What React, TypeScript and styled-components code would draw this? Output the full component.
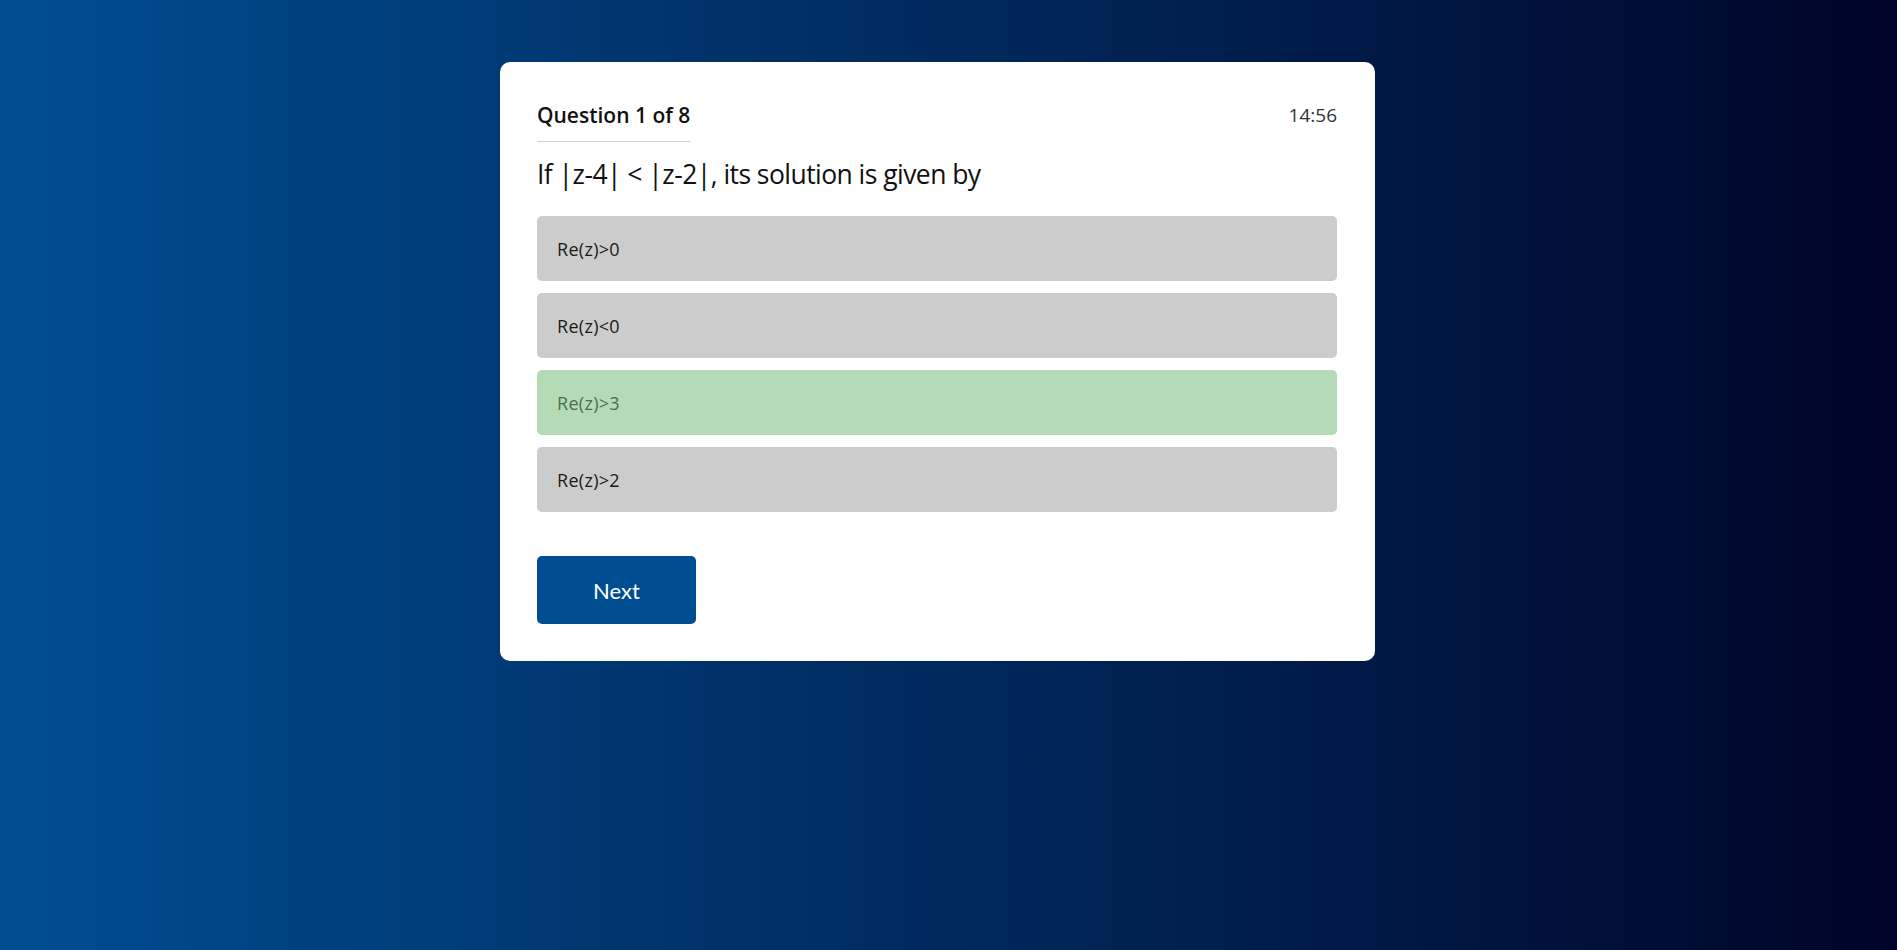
import React from "react";
import styled, { createGlobalStyle } from "styled-components";

const Global = createGlobalStyle`
  html, body { margin: 0; padding: 0; height: 100%; }
  body {
    font-family: "Open Sans", "Noto Sans", sans-serif;
    background: linear-gradient(to right, #004e92, #000428);
    min-height: 950px;
  }
  #root { min-height: 100%; }
`;

const Page = styled.div`
  display: flex;
  justify-content: center;
  align-items: flex-start;
  padding: 62px 22px 0 0;
`;

const Card = styled.div`
  width: 875px;
  box-sizing: border-box;
  background: #ffffff;
  border-radius: 10px;
  padding: 37px 38px 37px 37px;
`;

const Header = styled.div`
  display: flex;
  justify-content: space-between;
  align-items: flex-start;
`;

const Title = styled.div`
  font-size: 21px;
  font-weight: 600;
  color: #111;
  line-height: 33px;
  padding-bottom: 9px;
  border-bottom: 1px solid #cfcfcf;
`;

const Timer = styled.div`
  font-size: 19px;
  color: #333;
  line-height: 33px;
`;

const Question = styled.h2`
  margin: 12px 0 22px;
  font-size: 26.5px;
  font-weight: 400;
  letter-spacing: -0.55px;
  color: #111;
  line-height: 40px;
`;

const Options = styled.div`
  display: flex;
  flex-direction: column;
  gap: 12px;
`;

const Option = styled.div<{ $correct?: boolean }>`
  height: 65px;
  display: flex;
  align-items: center;
  padding: 0 20px;
  border-radius: 5px;
  font-size: 18px;
  letter-spacing: 0.3px;
  background: ${(p) => (p.$correct ? "#b5dab6" : "#cccccc")};
  color: ${(p) => (p.$correct ? "#4e6e4e" : "#1a1a1a")};
`;

const NextButton = styled.button`
  margin-top: 44px;
  width: 159px;
  height: 68px;
  border: none;
  border-radius: 5px;
  background: #004e92;
  color: #ffffff;
  font-family: "Lato", "Open Sans", sans-serif;
  font-size: 22px;
  cursor: pointer;
`;

const options = [
  { text: "Re(z)>0" },
  { text: "Re(z)<0" },
  { text: "Re(z)>3", correct: true },
  { text: "Re(z)>2" },
];

export default function App() {
  return (
    <>
      <Global />
      <Page>
        <Card>
          <Header>
            <Title>Question 1 of 8</Title>
            <Timer>14:56</Timer>
          </Header>
          <Question>If |z-4| &lt; |z-2|, its solution is given by</Question>
          <Options>
            {options.map((o) => (
              <Option key={o.text} $correct={o.correct}>
                {o.text}
              </Option>
            ))}
          </Options>
          <NextButton>Next</NextButton>
        </Card>
      </Page>
    </>
  );
}
